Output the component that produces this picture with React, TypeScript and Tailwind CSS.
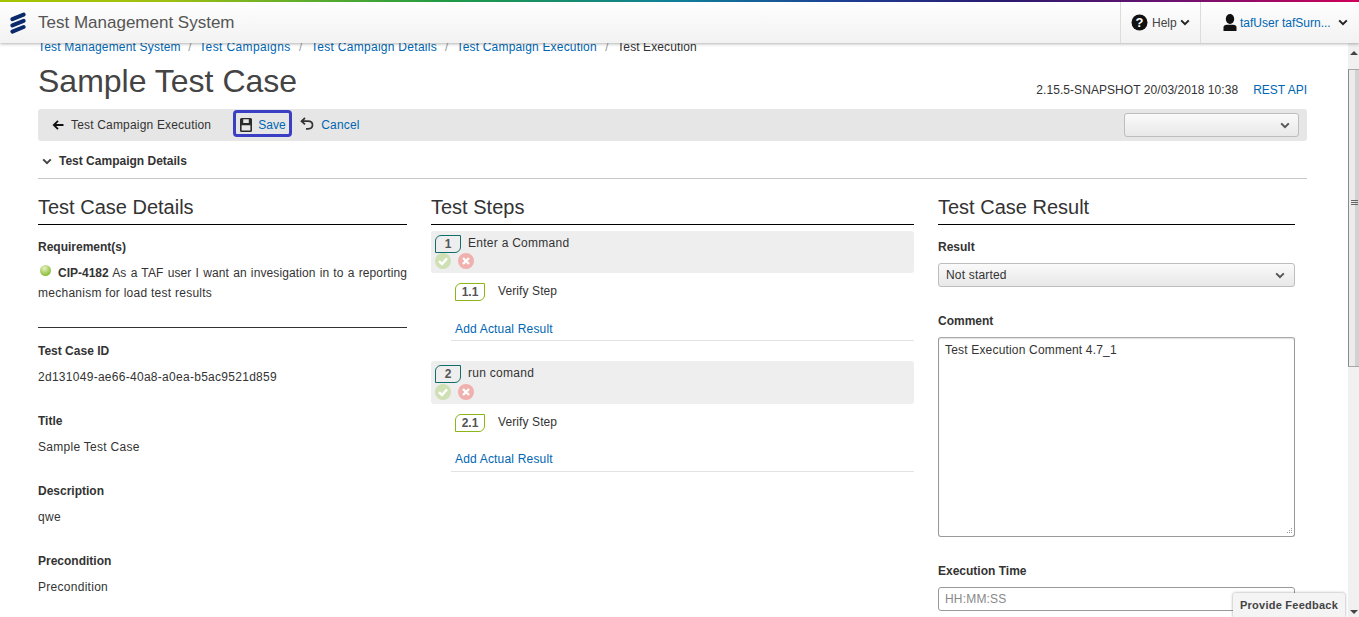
import React from "react";

const Chevron = ({ className = "", color = "#222" }: { className?: string; color?: string }) => (
  <svg width="10" height="7" viewBox="0 0 10 7" className={className}>
    <path d="M1.2 1.4 L5 5.2 L8.8 1.4" fill="none" stroke={color} strokeWidth="2" />
  </svg>
);

const Logo = () => (
  <svg width="16" height="22" viewBox="0 0 16 22">
    <g fill="none" stroke="#0b2a6b" strokeWidth="4" strokeLinecap="round">
      <path d="M2.4 7.2 L13.6 2.6" />
      <path d="M2.4 13.4 L13.6 8.8" />
      <path d="M2.4 19.6 L13.6 15" />
    </g>
  </svg>
);

const Label = ({ children }: { children: React.ReactNode }) => (
  <div className="font-bold tracking-normal leading-[20px] mb-[6px] text-[#333]">{children}</div>
);

const Field = ({ label, value }: { label: string; value: string }) => (
  <div className="mb-[24px]">
    <Label>{label}</Label>
    <div className="leading-[20px] tracking-[0.28px]">{value}</div>
  </div>
);

const Heading = ({ children }: { children: React.ReactNode }) => (
  <h2 className="text-[20px] leading-[28px] h-[32px] border-b border-black text-[#333] tracking-normal">{children}</h2>
);

const StepIcons = ({ className = "" }: { className?: string }) => (
  <div className={`flex gap-[7px] ${className}`}>
    <svg width="16" height="16" viewBox="0 0 16 16">
      <circle cx="8" cy="8" r="8" fill="#cfe0b4" />
      <path d="M4 8.2 L7 11 L12 5.4" fill="none" stroke="#fff" strokeWidth="2.4" />
    </svg>
    <svg width="16" height="16" viewBox="0 0 16 16">
      <circle cx="8" cy="8" r="8" fill="#efb0ae" />
      <path d="M5 5 L11 11 M11 5 L5 11" fill="none" stroke="#fff" strokeWidth="2.4" />
    </svg>
  </div>
);

const Step = ({
  n,
  sub,
  title,
  h,
  iconOffset,
  addOffset,
  lineOffset,
}: {
  n: string;
  sub: string;
  title: string;
  h: string;
  iconOffset: string;
  addOffset: string;
  lineOffset: string;
}) => (
  <div className="mb-[20px]">
    <div className={`${h} bg-[#eeeeee] rounded-[3px] pl-[4px] pt-[4px]`}>
      <div className="flex items-start">
        <div className="w-[26px] h-[18px] border border-[#0f6e6a] rounded-tl-[6px] rounded-br-[6px] flex items-center justify-center font-bold tracking-normal text-[#555] leading-none">
          {n}
        </div>
        <div className="ml-[7px] leading-[17px] tracking-[0.27px]">{title}</div>
      </div>
      <StepIcons className={iconOffset} />
    </div>
    <div className="ml-[24px] mt-[10px]">
      <div className="flex items-start">
        <div className="w-[30px] h-[18px] border border-[#8cb518] rounded-tl-[6px] rounded-br-[6px] flex items-center justify-center font-bold tracking-normal text-[#555] leading-none">
          {sub}
        </div>
        <div className="ml-[13px] leading-[16px] tracking-[0.1px]">Verify Step</div>
      </div>
      <div className={`${addOffset} text-[#0066b3] leading-[20px]`}>Add Actual Result</div>
    </div>
    <div className={`ml-[20px] ${lineOffset} h-[1px] bg-[#e3e3e3]`} />
  </div>
);

export default function App() {
  return (
    <div
      className="relative h-[617px] w-[1359px] overflow-hidden bg-white text-[12px] tracking-[0.18px] text-[#333]"
      style={{ fontFamily: '"Liberation Sans", Arial, sans-serif' }}
    >
      <header className="relative z-10 h-[43px] bg-gradient-to-b from-white to-[#f2f2f2] shadow-[0_1px_3px_rgba(0,0,0,0.3)]">
        <div className="h-[2px] bg-[linear-gradient(90deg,#a5c400_0%,#a0c010_12%,#1f9a45_33%,#0f7f9a_50%,#1d3f94_62%,#2a1a6e_74%,#6a1270_86%,#d0005a_100%)]" />
        <div className="flex h-[41px] items-stretch">
          <div className="ml-[10px] flex items-center">
            <Logo />
          </div>
          <div className="ml-[12px] flex items-center text-[17px] tracking-normal text-[#555]">Test Management System</div>
          <div className="ml-auto flex w-[80px] items-center border-l border-[#dcdcdc] pl-[10px] tracking-normal text-[#444]">
            <svg width="17" height="17" viewBox="0 0 17 17" className="mr-[4px]">
              <circle cx="8.5" cy="8.5" r="8" fill="#111" />
              <text x="8.5" y="13" textAnchor="middle" fontSize="13" fontWeight="bold" fill="#fff" fontFamily="Liberation Sans">?</text>
            </svg>
            Help
            <Chevron className="ml-[3px]" />
          </div>
          <div className="flex w-[159px] items-center border-l border-[#dcdcdc] pl-[22px] tracking-normal">
            <svg width="14" height="17" viewBox="0 0 14 17" className="mr-[3px]">
              <ellipse cx="7" cy="5" rx="4.2" ry="5" fill="#111" />
              <path d="M0.5 17 V13.4 Q0.5 11 4 10.8 H10 Q13.5 11 13.5 13.4 V17 Z" fill="#111" />
            </svg>
            <span className="text-[#0066b3]">tafUser tafSurn...</span>
            <Chevron className="ml-[7px]" />
          </div>
        </div>
      </header>

      <div className="flex h-[574px]">
        <main className="w-[1348px] overflow-hidden pl-[38px] pr-[41px]">
          <nav className="flex h-[18px] -mt-[5px] items-center leading-[18px]">
            <span className="text-[#0066b3]">Test Management System</span>
            <span className="mx-[7.5px] text-[#999]">/</span>
            <span className="tracking-[0.38px] text-[#0066b3]">Test Campaigns</span>
            <span className="mx-[8.5px] text-[#999]">/</span>
            <span className="tracking-[0.28px] text-[#0066b3]">Test Campaign Details</span>
            <span className="mx-[8px] text-[#999]">/</span>
            <span className="text-[#0066b3]">Test Campaign Execution</span>
            <span className="mx-[8.5px] text-[#999]">/</span>
            <span className="tracking-[0.1px]">Test Execution</span>
          </nav>
          <div className="flex h-[52px] items-start justify-between">
            <h1 className="mt-[3px] text-[32px] leading-[44px] tracking-normal text-[#444]">Sample Test Case</h1>
            <div className="mt-[26px] flex leading-[16px] tracking-[0.06px]">
              <span>2.15.5-SNAPSHOT 20/03/2018 10:38</span>
              <span className="ml-[15px] tracking-normal text-[#0066b3]">REST API</span>
            </div>
          </div>

          <div className="mt-[1px] flex h-[32px] items-center rounded-[3px] bg-[#e6e6e6] pl-[14px] pr-[8px]">
            <svg width="12" height="12" viewBox="0 0 12 12" className="mr-[7px]">
              <path d="M11.5 6 H2 M6 1.8 L1.8 6 L6 10.2" fill="none" stroke="#111" strokeWidth="1.8" />
            </svg>
            <span>Test Campaign Execution</span>
            <div className="ml-[22px] -mt-[3px] flex h-[27px] w-[59px] items-center rounded-[4px] border-[3px] border-[#3b3fc4] bg-[#e6e6e6] pl-[4px] pt-[2px]">
              <svg width="12" height="14" viewBox="0 0 12 14" className="mr-[6px]">
                <path
                  fillRule="evenodd"
                  d="M1.5 0 H10.5 Q12 0 12 1.5 V12.5 Q12 14 10.5 14 H1.5 Q0 14 0 12.5 V1.5 Q0 0 1.5 0 Z M3.2 1.3 V5 H8.8 V1.3 Z M1.6 7.2 V12.6 H10.4 V7.2 Z"
                  fill="#2b2b2b"
                />
              </svg>
              <span className="text-[#0066b3] tracking-[0.05px]">Save</span>
            </div>
            <svg width="14" height="14" viewBox="0 0 14 14" className="ml-[8px] mr-[7px] -mt-[2px]">
              <path d="M5 1 L1.5 4.2 L5 7.4 M1.8 4.2 H8 Q12.5 4.2 12.5 8 Q12.5 11.8 8 11.8 H6" fill="none" stroke="#333" strokeWidth="1.7" />
            </svg>
            <span className="text-[#0066b3]">Cancel</span>
            <div className="ml-auto flex h-[24px] w-[175px] items-center justify-end rounded-[3px] border border-[#bdbdbd] bg-gradient-to-b from-[#fafafa] to-[#e8e8e8] pr-[8px]">
              <Chevron color="#555" />
            </div>
          </div>

          <div className="flex h-[38px] items-center border-b border-[#c8c8c8] pl-[4px] pt-[3px]">
            <Chevron color="#444" className="mr-[7px]" />
            <span className="font-bold tracking-normal">Test Campaign Details</span>
          </div>

          <div className="mt-[14px] flex gap-[24px]">
            <section className="w-[369px]">
              <Heading>Test Case Details</Heading>
              <div className="mt-[12px]">
                <Label>Requirement(s)</Label>
                <div className="leading-[20px] text-justify tracking-[0.1px]">
                  <span className="relative -top-[3px] ml-[2px] mr-[7px] inline-block h-[11px] w-[11px] rounded-full bg-[radial-gradient(circle_at_40%_30%,#e8f2c4,#8fbf3c_70%)] align-middle" />
                  <b className="tracking-normal">CIP-4182</b> As a TAF user I want an invesigation in to a reporting <span className="tracking-[0.26px]">mechanism for load test results</span>
                </div>
                <div className="mt-[24px] mb-[13px] h-[1px] bg-[#333]" />
              </div>
              <Field label="Test Case ID" value="2d131049-ae66-40a8-a0ea-b5ac9521d859" />
              <Field label="Title" value="Sample Test Case" />
              <Field label="Description" value="qwe" />
              <Field label="Precondition" value="Precondition" />
            </section>

            <section className="w-[483px]">
              <Heading>Test Steps</Heading>
              <div className="mt-[6px]">
                <Step n="1" sub="1.1" title="Enter a Command" h="h-[42px]" iconOffset="mt-0" addOffset="mt-[18px]" lineOffset="mt-[1px]" />
                <Step n="2" sub="2.1" title="run comand" h="h-[43px]" iconOffset="mt-[1px]" addOffset="mt-[17px]" lineOffset="mt-[2px]" />
              </div>
            </section>

            <section className="w-[357px]">
              <Heading>Test Case Result</Heading>
              <div className="mt-[12px]">
                <div className="font-bold tracking-normal leading-[20px]">Result</div>
                <div className="mt-[6px] flex h-[24px] items-center justify-between rounded-[3px] border border-[#bdbdbd] bg-gradient-to-b from-[#fafafa] to-[#e8e8e8] pl-[7px] pr-[9px]">
                  <span>Not started</span>
                  <Chevron color="#555" />
                </div>
                <div className="mt-[24px] font-bold tracking-normal leading-[20px]">Comment</div>
                <div className="relative mt-[6px] h-[200px] rounded-[3px] border border-[#999] border-t-[#aaa] pl-[6px] pt-[4px] leading-[16px] shadow-[inset_0_1px_1px_rgba(0,0,0,0.12)]">
                  Test Execution Comment 4.7_1
                  <svg width="8" height="8" viewBox="0 0 8 8" className="absolute bottom-[1px] right-[1px]">
                    <path d="M6 1h1v1H6zM4 3h1v1H4zM6 3h1v1H6zM2 5h1v1H2zM4 5h1v1H4zM6 5h1v1H6z" fill="#999" />
                  </svg>
                </div>
                <div className="mt-[24px] font-bold tracking-normal leading-[20px]">Execution Time</div>
                <div className="mt-[6px] flex h-[24px] items-center rounded-[3px] border border-[#999] pl-[6px] text-[#888]">HH:MM:SS</div>
              </div>
            </section>
          </div>
        </main>

        <div className="relative w-[11px] bg-[#f0f0f0]">
          <svg width="8" height="4" viewBox="0 0 8 4" className="absolute left-[2px] top-[8px]">
            <path d="M0 4 L4 0 L8 4 Z" fill="#444" />
          </svg>
          <div className="absolute left-0 top-[26px] flex h-[298px] w-[11px] items-start justify-center border-y border-l border-y-[#a8a8a8] border-l-[#8a8a8a] bg-[linear-gradient(90deg,#ececec_0%,#ececec_60%,#d2d2d2_60%,#d2d2d2_100%)] pt-[130px]">
            <div className="flex w-[7px] flex-col gap-[1px]">
              <div className="h-[1px] bg-[#666]" />
              <div className="h-[1px] bg-[#666]" />
              <div className="h-[1px] bg-[#666]" />
            </div>
          </div>
          <svg width="8" height="4" viewBox="0 0 8 4" className="absolute bottom-[3px] left-[2px]">
            <path d="M0 0 L4 4 L8 0 Z" fill="#444" />
          </svg>
        </div>
      </div>

      <div className="absolute bottom-0 left-[1233px] z-20 flex h-[24px] w-[112px] items-center justify-center rounded-t-[2px] bg-[#f4f4f4] text-[11px] font-bold tracking-[0.25px] text-[#444] shadow-[0_0_3px_rgba(0,0,0,0.4)]">
        Provide Feedback
      </div>
    </div>
  );
}
